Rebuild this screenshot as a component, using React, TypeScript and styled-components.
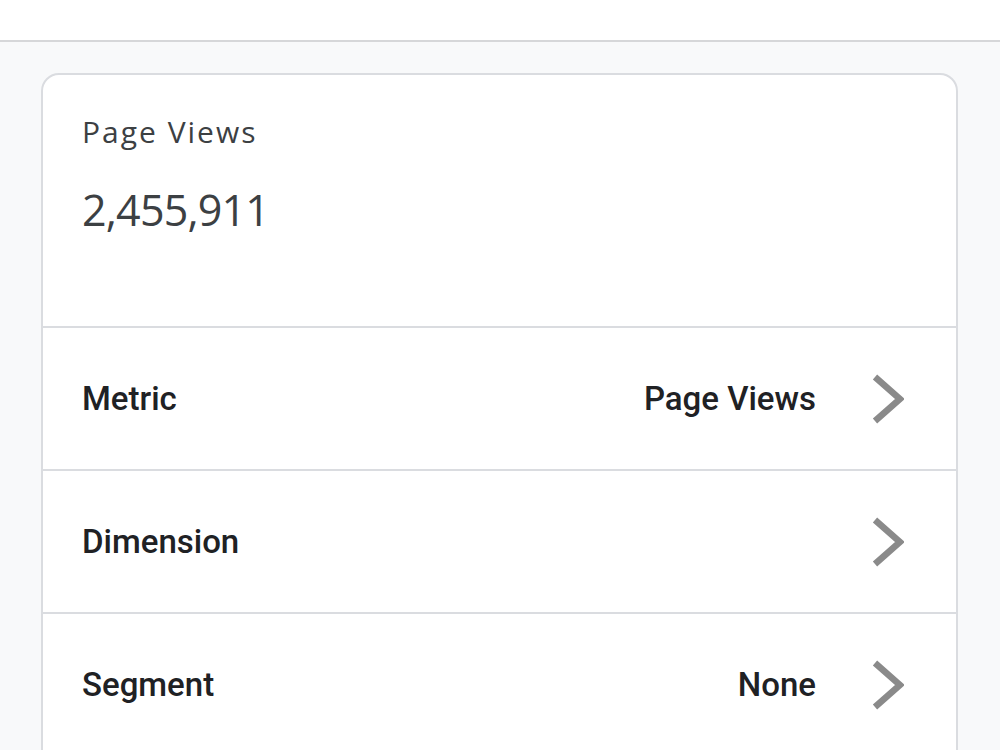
import React from "react";
import styled, { createGlobalStyle } from "styled-components";

const Global = createGlobalStyle`
  html, body { margin: 0; padding: 0; background: #f8f9fa; }
  body { font-family: Roboto, "Liberation Sans", sans-serif; }
`;

const Page = styled.div`
  width: 1000px;
  height: 750px;
  overflow: hidden;
  background: #f8f9fa;
`;

const TopBar = styled.header`
  height: 40px;
  background: #ffffff;
  border-bottom: 2px solid #d6d7d9;
`;

const Content = styled.main`
  padding: 31px 42px 0 41px;
`;

const Card = styled.section`
  background: #ffffff;
  border: 2px solid #dadce0;
  border-radius: 18px;
  overflow: hidden;
  padding-bottom: 40px;
`;

const Summary = styled.div`
  height: 253px;
  padding: 37px 40px 0 39px;
  box-sizing: border-box;
  border-bottom: 2px solid #dadce0;
`;

const Title = styled.div`
  font-family: "Open Sans", Roboto, sans-serif;
  font-size: 30px;
  letter-spacing: 2px;
  color: #3c4043;
  line-height: 40px;
`;

const Value = styled.div`
  font-family: "Open Sans", Roboto, sans-serif;
  font-size: 43px;
  letter-spacing: -0.8px;
  color: #3c4043;
  margin-top: 33px;
  line-height: 50px;
`;

const Row = styled.div`
  height: 141px;
  display: flex;
  align-items: center;
  padding: 0 52px 0 39px;
  box-sizing: content-box;
  border-bottom: 2px solid #dadce0;
`;

const Label = styled.div`
  flex: 1;
  font-family: Roboto, sans-serif;
  font-weight: 500;
  font-size: 33px;
  color: #202124;
`;

const RowValue = styled.div`
  font-family: Roboto, sans-serif;
  font-weight: 500;
  font-size: 33px;
  color: #202124;
  margin-right: 54px;
`;

const Chevron = () => (
  <svg width="34" height="52" viewBox="0 0 34 52">
    <polyline points="5,4 30,26 5,48" fill="none" stroke="#8a8a8a" strokeWidth="6.5" />
  </svg>
);

const rows = [
  { label: "Metric", value: "Page Views" },
  { label: "Dimension", value: "" },
  { label: "Segment", value: "None" },
];

export default function App() {
  return (
    <Page>
      <Global />
      <TopBar />
      <Content>
        <Card>
          <Summary>
            <Title>Page Views</Title>
            <Value>2,455,911</Value>
          </Summary>
          {rows.map((r) => (
            <Row key={r.label}>
              <Label>{r.label}</Label>
              {r.value && <RowValue>{r.value}</RowValue>}
              <Chevron />
            </Row>
          ))}
        </Card>
      </Content>
    </Page>
  );
}
